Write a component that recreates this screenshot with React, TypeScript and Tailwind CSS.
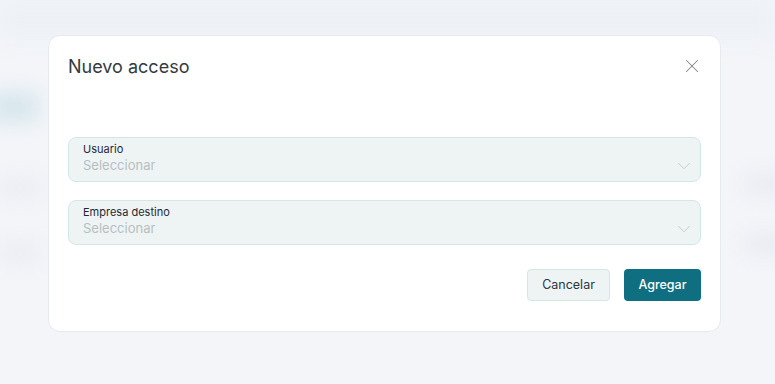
import { X, ChevronDown } from "lucide-react";

function SelectField({ label }: { label: string }) {
  return (
    <div className="flex h-[45px] w-full items-start justify-between rounded-lg border border-[#d3e7e5] bg-[#eef4f4] pl-[14px] pr-[5px] pt-[4px]">
      <div className="flex flex-col">
        <span className="text-[11px] leading-[14px] text-[#1f2937]">{label}</span>
        <span className="text-[13px] leading-[18px] text-[#b7bec3]">Seleccionar</span>
      </div>
      <ChevronDown size={22} strokeWidth={1} className="mt-[13px] text-[#c2c8cc]" />
    </div>
  );
}

export default function App() {
  return (
    <div className="relative h-[384px] w-[775px] overflow-hidden bg-[#f3f5f9] font-['Inter',sans-serif]">
      {/* blurred page behind the modal */}
      <div className="absolute inset-0 blur-[10px]">
        <div className="absolute left-0 top-0 h-[40px] w-full bg-[#edf1f6]" />
        <div className="absolute left-[-10px] top-[92px] h-[30px] w-[48px] rounded-md bg-[#d6e6ec]" />
        <div className="absolute left-0 top-[180px] h-[16px] w-[40px] bg-[#e8ebf0]" />
        <div className="absolute left-0 top-[245px] h-[16px] w-[40px] bg-[#e8ebf0]" />
        <div className="absolute right-[-10px] top-[176px] h-[16px] w-[40px] bg-[#e6e9ee]" />
        <div className="absolute right-[-10px] top-[236px] h-[16px] w-[40px] bg-[#e6e9ee]" />
      </div>

      <div className="relative pl-[48px] pt-[35px]">
        <div className="flex w-[673px] flex-col rounded-xl border border-[#e6eaf0] bg-white px-[19px] pb-[30px] pt-[18px]">
          <div className="flex items-start justify-between">
            <h2 className="text-[18px] leading-[26px] text-[#333a40]">Nuevo acceso</h2>
            <X size={22} strokeWidth={1.1} className="mr-[-2px] mt-[1px] text-[#80868d]" />
          </div>

          <div className="mt-[57px] flex flex-col gap-[18px]">
            <SelectField label="Usuario" />
            <SelectField label="Empresa destino" />
          </div>

          <div className="mt-[24px] flex justify-end gap-[14px]">
            <button
              type="button"
              className="h-[32px] w-[83px] rounded-[4px] border border-[#d3e7e5] bg-[#eef4f4] text-[12.5px] text-[#2b3440]"
            >
              Cancelar
            </button>
            <button
              type="button"
              className="h-[32px] w-[77px] rounded-[4px] bg-[#0f6f80] text-[12.5px] font-medium text-white"
            >
              Agregar
            </button>
          </div>
        </div>
      </div>
    </div>
  );
}
